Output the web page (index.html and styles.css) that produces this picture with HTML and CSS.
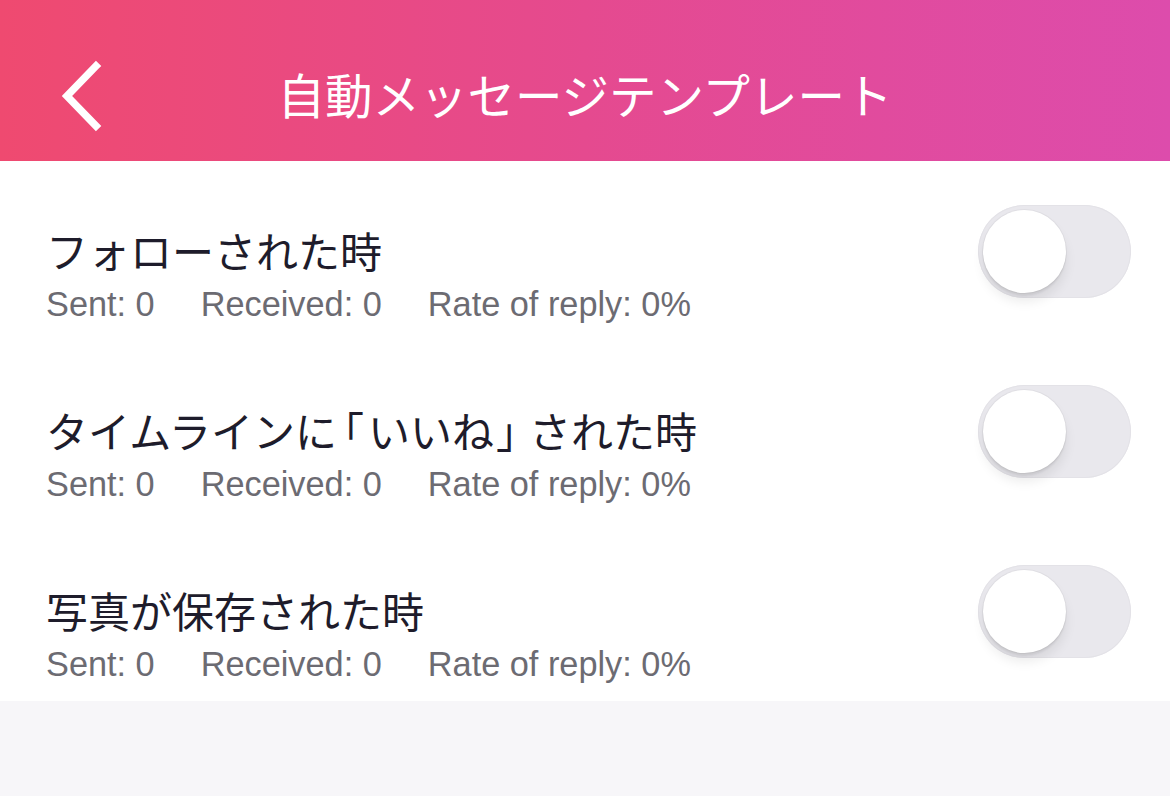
FILE: index.html
```html
<!DOCTYPE html>
<html lang="ja">
<head>
<meta charset="utf-8">
<title>自動メッセージテンプレート</title>
<link rel="stylesheet" href="styles.css">
</head>
<body>
<header class="nav">
  <div class="back" aria-label="戻る">
    <svg width="50" height="80" viewBox="0 0 50 80">
      <polyline points="37,12 8,42 37,72" fill="none" stroke="#fff" stroke-width="7.5" stroke-linecap="square" stroke-linejoin="miter"/>
    </svg>
  </div>
  <h1 class="nav-title">自動メッセージテンプレート</h1>
</header>
<main class="list">
  <div class="row">
    <div class="text">
      <div class="title">フォローされた時</div>
      <div class="stats"><span>Sent: 0</span><span>Received: 0</span><span>Rate of reply: 0%</span></div>
    </div>
    <div class="toggle"><div class="thumb"></div></div>
  </div>
  <div class="row">
    <div class="text">
      <div class="title">タイムラインに<span class="brk open">「</span>いいね<span class="brk close">」</span>された時</div>
      <div class="stats"><span>Sent: 0</span><span>Received: 0</span><span>Rate of reply: 0%</span></div>
    </div>
    <div class="toggle"><div class="thumb"></div></div>
  </div>
  <div class="row">
    <div class="text">
      <div class="title">写真が保存された時</div>
      <div class="stats"><span>Sent: 0</span><span>Received: 0</span><span>Rate of reply: 0%</span></div>
    </div>
    <div class="toggle"><div class="thumb"></div></div>
  </div>
</main>
</body>
</html>
```
FILE: styles.css
```css
html, body {
  margin: 0;
  padding: 0;
}
body {
  background: #f7f6f9;
  font-family: "Noto Sans CJK JP", "Liberation Sans", sans-serif;
  width: 1170px;
  height: 796px;
  overflow: hidden;
}
.nav {
  height: 161px;
  box-sizing: border-box;
  padding-top: 26px;
  background: linear-gradient(90deg, #ef4a70 0%, #e54a8f 50%, #dd4cac 100%);
  display: flex;
  align-items: center;
  position: relative;
}
.back {
  position: absolute;
  left: 59px;
  top: 54px;
  width: 50px;
  height: 80px;
}
.nav-title {
  margin: 0;
  width: 100%;
  text-align: center;
  color: #fff;
  font-weight: 400;
  font-size: 47.5px;
  line-height: 60px;
  font-family: "Noto Sans CJK JP", sans-serif;
}
.list {
  background: #fff;
}
.row {
  height: 180px;
  display: flex;
  align-items: center;
  justify-content: space-between;
  padding: 0 39px 0 46px;
}
.text {
  align-self: flex-start;
  padding-top: 64px;
}
.title {
  font-family: "Noto Sans CJK JP", sans-serif;
  font-size: 42px;
  line-height: 50px;
  color: #1e1c2b;
}
.brk {
  font-feature-settings: "halt";
}
.brk.open {
  margin-left: 6px;
  margin-right: 4px;
}
.brk.close {
  margin-left: 2px;
  margin-right: 12px;
}
.stats {
  margin-top: 9px;
  font-family: "Liberation Sans", "Noto Sans", sans-serif;
  font-size: 34.3px;
  line-height: 40px;
  color: #6c6b72;
  display: flex;
  gap: 46px;
}
.toggle {
  width: 153px;
  height: 93px;
  border-radius: 47px;
  background: #e9e8ed;
  box-sizing: border-box;
  padding: 5px;
  position: relative;
  box-shadow: inset 0 0 0 1px #e3e2e7;
}
.thumb {
  width: 83px;
  height: 83px;
  border-radius: 50%;
  background: #fff;
  box-shadow: 0 0 0 1px rgba(0,0,0,0.04), 0 3px 2px rgba(0,0,0,0.06), 0 9px 12px rgba(0,0,0,0.08);
}
```
